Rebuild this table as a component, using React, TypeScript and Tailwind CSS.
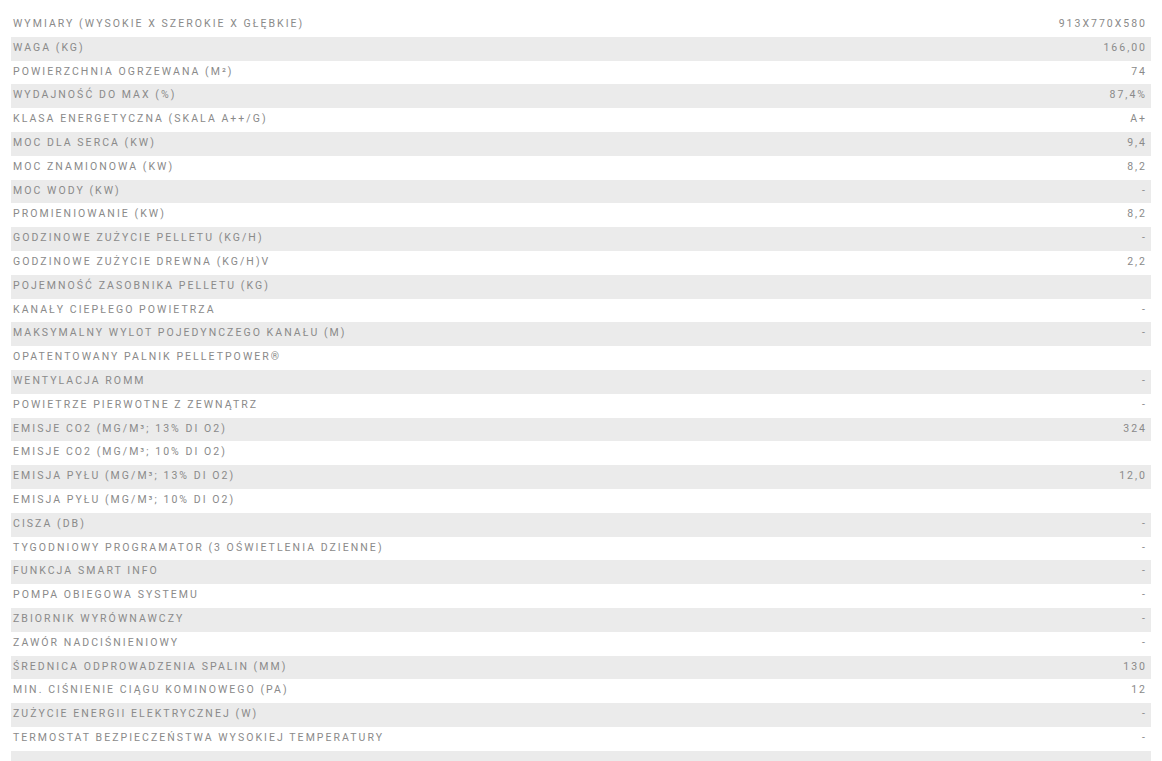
const rows: [string, string][] = [
  ["Wymiary (wysokie x szerokie x głębkie)", "913X770X580"],
  ["Waga (kg)", "166,00"],
  ["Powierzchnia ogrzewana (m²)", "74"],
  ["Wydajność do max (%)", "87,4%"],
  ["Klasa energetyczna (skala A++/G)", "A+"],
  ["Moc dla serca (kW)", "9,4"],
  ["Moc znamionowa (kW)", "8,2"],
  ["Moc wody (kW)", "-"],
  ["Promieniowanie (kW)", "8,2"],
  ["Godzinowe zużycie pelletu (kg/h)", "-"],
  ["Godzinowe zużycie drewna (kg/h)v", "2,2"],
  ["Pojemność zasobnika pelletu (kg)", ""],
  ["Kanały ciepłego powietrza", "-"],
  ["Maksymalny wylot pojedynczego kanału (m)", "-"],
  ["Opatentowany palnik PelletPower®", ""],
  ["Wentylacja Romm", "-"],
  ["Powietrze pierwotne z zewnątrz", "-"],
  ["Emisje CO2 (mg/m³; 13% di O2)", "324"],
  ["Emisje CO2 (mg/m³; 10% di O2)", ""],
  ["Emisja pyłu (mg/m³; 13% di O2)", "12,0"],
  ["Emisja pyłu (mg/m³; 10% di O2)", ""],
  ["Cisza (dB)", "-"],
  ["Tygodniowy programator (3 oświetlenia dzienne)", "-"],
  ["Funkcja Smart Info", "-"],
  ["Pompa obiegowa systemu", "-"],
  ["Zbiornik wyrównawczy", "-"],
  ["Zawór nadciśnieniowy", "-"],
  ["Średnica odprowadzenia spalin (mm)", "130"],
  ["Min. ciśnienie ciągu kominowego (Pa)", "12"],
  ["Zużycie energii elektrycznej (W)", "-"],
  ["Termostat bezpieczeństwa wysokiej temperatury", "-"],
  ["", ""],
];

export default function App() {
  return (
    <div className="w-full min-h-screen bg-white pt-[13px] px-[11px]">
      {/* Spec table */}
      <div className="flex flex-col font-['Roboto',sans-serif] text-[10.5px] tracking-[2.05px] uppercase text-[#8a8a8a]">
        {rows.map(([label, value], i) => (
          <div
            key={i}
            className={`flex items-center justify-between h-[23.8px] pl-[2px] pr-[4px] pb-[2px] ${
              i % 2 === 1 ? "bg-[#ebebeb]" : "bg-white"
            }`}
          >
            <span>{label}</span>
            <span className="tracking-[2px]">{value}</span>
          </div>
        ))}
      </div>
    </div>
  );
}
